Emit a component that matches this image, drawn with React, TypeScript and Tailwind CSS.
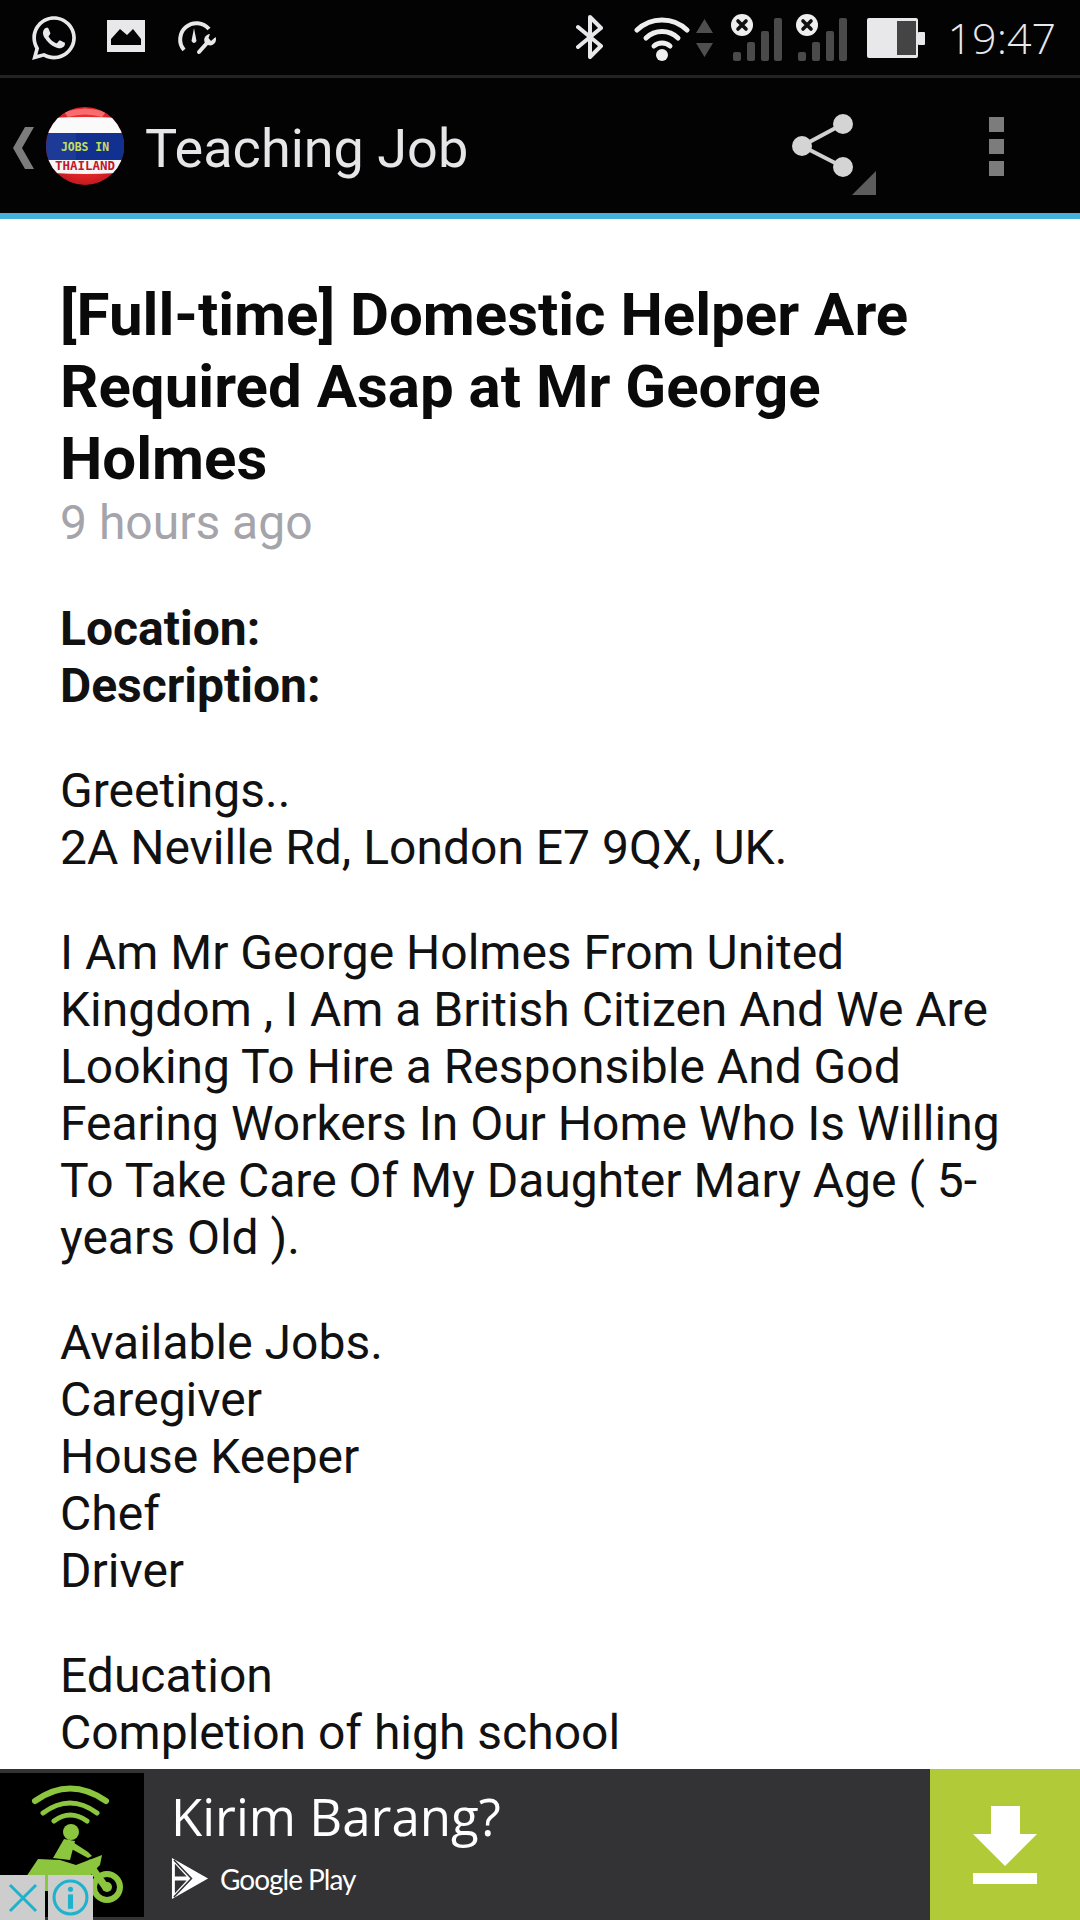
import React from "react";
import { FaWhatsapp } from "react-icons/fa";

const Signal = () => (
  <svg width="52" height="48" viewBox="0 0 52 48" className="block">
    <circle cx="11" cy="11" r="11" fill="#eeeeee" />
    <path d="M7 7 L15 15 M15 7 L7 15" stroke="#111" strokeWidth="3.6" strokeLinecap="round" />
    <rect x="2" y="38" width="8" height="9" rx="2" fill="#4a4a4a" />
    <rect x="16" y="28" width="8" height="19" rx="2" fill="#4a4a4a" />
    <rect x="30" y="17" width="8" height="30" rx="2" fill="#4a4a4a" />
    <rect x="43" y="4" width="8" height="43" rx="2" fill="#4a4a4a" />
  </svg>
);

const StatusBar = () => (
  <div className="h-[75px] shrink-0 bg-[#030304] flex items-center relative">
    <div className="ml-[29px] flex items-center text-[#e8e8ea]">
      <FaWhatsapp size={50} />
      <svg width="38" height="32" viewBox="0 0 38 32" className="ml-[28px] mt-[-3px]">
        <path fillRule="evenodd" fill="#e8e8ea" d="M0 0H38V32H0Z M4 25 L4 19 L13 9 L20 15 L26 9 L34 19 L34 25 Z" />
      </svg>
      <svg width="41" height="38" viewBox="0 0 41 38" className="ml-[31px] mt-[-3px]">
        <path d="M8 33 A15.5 15.5 0 1 1 33 12" fill="none" stroke="#e8e8ea" strokeWidth="4" />
        <path d="M18 11 L20.5 24 Q18 28 15.5 24 Z" fill="#e8e8ea" />
        <path d="M23 35 L31 26" fill="none" stroke="#e8e8ea" strokeWidth="4" strokeLinecap="round" />
        <path d="M29 26 A6 6 0 0 1 34 17 L32.5 21 L35 24 L39.5 20 A6 6 0 0 1 32 28 Z" fill="#e8e8ea" />
      </svg>
    </div>
    <div className="ml-auto flex items-center">
      <svg width="28" height="46" viewBox="0 0 28 46" className="mt-[-1px]">
        <path d="M2 13 L25 32 L14 43 V3 L25 14 L2 33" fill="none" stroke="#e8e8ea" strokeWidth="4" strokeLinejoin="round" strokeLinecap="round" />
      </svg>
      <svg width="56" height="48" viewBox="0 0 56 48" className="ml-[30px]">
        <path d="M3 16 A36 36 0 0 1 53 16" fill="none" stroke="#eeeeee" strokeWidth="5" strokeLinecap="round" />
        <path d="M12 24 A23 23 0 0 1 44 24" fill="none" stroke="#eeeeee" strokeWidth="5" strokeLinecap="round" />
        <path d="M20 32 A12 12 0 0 1 36 32" fill="none" stroke="#eeeeee" strokeWidth="5" strokeLinecap="round" />
        <circle cx="28" cy="41" r="6" fill="#eeeeee" />
      </svg>
      <svg width="17" height="38" viewBox="0 0 17 38" className="ml-[6px] mr-[18px]">
        <path d="M8.5 0 L17 14 H0 Z M0 24 H17 L8.5 38 Z" fill="#4f4f4f" />
      </svg>
      <Signal />
      <div className="ml-[13px]"><Signal /></div>
      <svg width="58" height="40" viewBox="0 0 58 40" className="ml-[19px]">
        <rect width="51" height="40" rx="2" fill="#e8e8ea" />
        <rect x="30" y="3" width="19" height="34" fill="#444" />
        <rect x="51" y="14" width="7" height="13" rx="1" fill="#e8e8ea" />
      </svg>
      <div className="ml-[23px] mr-[24px] text-[43px] leading-[48px] font-light text-[#e8e8ea] font-['Open_Sans',sans-serif]">19:47</div>
    </div>
  </div>
);

const Logo = () => (
  <svg width="78" height="78" viewBox="0 0 78 78" className="block">
    <defs>
      <clipPath id="c"><circle cx="39" cy="39" r="39" /></clipPath>
      <radialGradient id="r" cx="0.5" cy="0.45" r="0.6">
        <stop offset="0.6" stopColor="#ee2a2e" />
        <stop offset="1" stopColor="#b8161b" />
      </radialGradient>
    </defs>
    <g clipPath="url(#c)">
      <rect width="78" height="78" fill="url(#r)" />
      <path d="M4 11 Q39 9 74 11 L78 26 H0 Z" fill="#fafafa" />
      <rect y="26" width="78" height="27" fill="#1c3a96" />
      <rect x="30" y="26" width="48" height="27" fill="#12308f" />
      <path d="M0 53 H78 L70 66 Q39 68 8 66 Z" fill="#f6f6f6" />
      <path d="M18 5 Q39 -2 60 5 L56 10 Q39 5 22 10 Z" fill="#ff8a8a" opacity="0.7" />
      <text x="39" y="43.5" textAnchor="middle" textLength="48" lengthAdjust="spacingAndGlyphs" fontFamily="'DejaVu Sans Mono',monospace" fontWeight="700" fontSize="12" fill="#c6e05a">JOBS IN</text>
      <text x="39" y="63" textAnchor="middle" textLength="60" lengthAdjust="spacingAndGlyphs" fontFamily="'DejaVu Sans Mono',monospace" fontWeight="700" fontSize="12" fill="#c2182c">THAILAND</text>
    </g>
  </svg>
);

const ActionBar = () => (
  <>
    <div className="h-[3px] shrink-0 bg-[#232325]" />
    <div className="h-[135px] shrink-0 bg-[#030304] flex items-start">
      <svg width="21" height="42" viewBox="0 0 21 42" className="ml-[13px] mt-[49px]">
        <path d="M21 0 L9 21 L21 42 H12 L0 21 L12 0 Z" fill="#7c7c7c" />
      </svg>
      <div className="ml-[12px] mt-[29px]"><Logo /></div>
      <div className="ml-[21px] mt-[44px] text-[54px] leading-[54px] text-[#e6e6e8] font-['Roboto',sans-serif]">Teaching Job</div>
      <svg width="84" height="81" viewBox="0 0 84 81" className="ml-auto mt-[36px]">
        <path d="M51 10 L10 32 L51 53" fill="none" stroke="#d0d0d0" strokeWidth="4" />
        <circle cx="51" cy="10" r="10" fill="#d4d4d4" />
        <circle cx="10" cy="32" r="10" fill="#d4d4d4" />
        <circle cx="51" cy="53" r="10" fill="#d4d4d4" />
        <path d="M84 57 V81 H60 Z" fill="#5c5c5c" />
      </svg>
      <div className="ml-[113px] mr-[76px] mt-[39px] flex flex-col gap-[7px]">
        <div className="w-[15px] h-[15px] bg-[#7c7c7c]" />
        <div className="w-[15px] h-[15px] bg-[#7c7c7c]" />
        <div className="w-[15px] h-[15px] bg-[#7c7c7c]" />
      </div>
    </div>
    <div className="h-[6px] shrink-0 bg-[#45b0dc]" />
  </>
);

const Bike = () => (
  <svg width="144" height="144" viewBox="0 0 144 144" className="block">
    <rect width="144" height="144" fill="#000" />
    <g fill="none" stroke="#8cc63f" strokeLinecap="round">
      <path d="M35 28 Q70 3 106 28" strokeWidth="6" />
      <path d="M43 40 Q70 20 97 40" strokeWidth="5" />
      <path d="M54 48 Q70 36 87 48" strokeWidth="5" />
    </g>
    <g fill="#8cc63f">
      <circle cx="71" cy="59" r="8" />
      <path d="M64 66 L53 85 L70 87 L75 68 Z" />
      <path d="M38 86 L60 87 L76 92 L102 82 L100 92 L92 100 L86 118 L40 118 L24 118 L26 104 Z" />
      <path d="M68 66 L88 79 L92 83 L88 85 L66 73 Z" />
      <path d="M90 86 L110 114 L104 118 L85 92 Z" />
    </g>
    <circle cx="107" cy="114" r="13" fill="none" stroke="#8cc63f" strokeWidth="6" />
    <circle cx="107" cy="114" r="5" fill="#8cc63f" />
  </svg>
);

const Ad = () => (
  <div className="h-[151px] shrink-0 bg-[#333235] flex relative">
    <div className="mt-[4px] w-[144px] h-[144px]"><Bike /></div>
    <div className="absolute left-0 bottom-0 flex gap-[3px]">
      <div className="w-[45px] h-[45px] bg-[#cdcdcd] flex items-center justify-center">
        <svg width="30" height="30" viewBox="0 0 30 30">
          <path d="M2 2 L28 28 M28 2 L2 28" stroke="#1fb2cc" strokeWidth="3" />
        </svg>
      </div>
      <div className="w-[45px] h-[45px] bg-[#cdcdcd] flex items-start justify-center pt-[4px]">
        <svg width="37" height="37" viewBox="0 0 36 36">
          <circle cx="18" cy="18" r="16" fill="none" stroke="#1fb2cc" strokeWidth="3" />
          <circle cx="18" cy="10" r="2.5" fill="#1fb2cc" />
          <rect x="15.5" y="15" width="5" height="14" fill="#1fb2cc" />
        </svg>
      </div>
    </div>
    <div className="ml-[27px] flex flex-col">
      <div className="mt-[14px] text-[51px] leading-[66px] text-white font-['Open_Sans',sans-serif]">Kirim Barang?</div>
      <div className="mt-[9px] flex items-center">
        <svg width="39" height="41" viewBox="0 0 38 42">
          <path fillRule="evenodd" fill="#fff" d="M0 0 L37 21 L0 42 Z M3 6 L3 19 L15 19 Z M3 23 L3 36 L15 23 Z" />
          <path d="M2 2 L20 21 L2 40" fill="none" stroke="#333235" strokeWidth="1.6" />
        </svg>
        <div className="ml-[10px] text-[28px] leading-none text-white tracking-[-1px] font-['Lato',sans-serif]">Google Play</div>
      </div>
    </div>
    <div className="ml-auto w-[150px] bg-[#b0cb37] flex flex-col items-center pt-[37px]">
      <svg width="64" height="78" viewBox="0 0 64 78" className="block">
        <path d="M18 0 H47 V28 H64 L32 60 L0 28 H18 Z" fill="#fff" />
        <rect y="67" width="64" height="11" fill="#fff" />
      </svg>
    </div>
  </div>
);

export default function App() {
  return (
    <div className="w-[1080px] h-[1920px] flex flex-col overflow-hidden bg-white font-['Roboto',sans-serif]">
      <StatusBar />
      <ActionBar />
      <div className="flex-1 min-h-0 overflow-hidden px-[60px] pt-[60px] text-black">
        <h1 className="text-[60px] leading-[72px] font-bold text-[#0a0a0a]">
          [Full-time] Domestic Helper Are<br />Required Asap at Mr George<br />Holmes
        </h1>
        <p className="text-[48px] leading-[56px] text-[#a4a4aa]">9 hours ago</p>
        <div className="mt-[49px] text-[48px] leading-[57px] text-[#111]">
          <p className="font-bold">Location:<br />Description:</p>
          <p className="mt-[48px]">Greetings..<br />2A Neville Rd, London E7 9QX, UK.</p>
          <p className="mt-[48px]">I Am Mr George Holmes From United<br />Kingdom , I Am a British Citizen And We Are<br />Looking To Hire a Responsible And God<br />Fearing Workers In Our Home Who Is Willing<br />To Take Care Of My Daughter Mary Age ( 5-<br />years Old ).</p>
          <p className="mt-[48px]">Available Jobs.<br />Caregiver<br />House Keeper<br />Chef<br />Driver</p>
          <p className="mt-[48px]">Education<br />Completion of high school</p>
        </div>
      </div>
      <Ad />
    </div>
  );
}
